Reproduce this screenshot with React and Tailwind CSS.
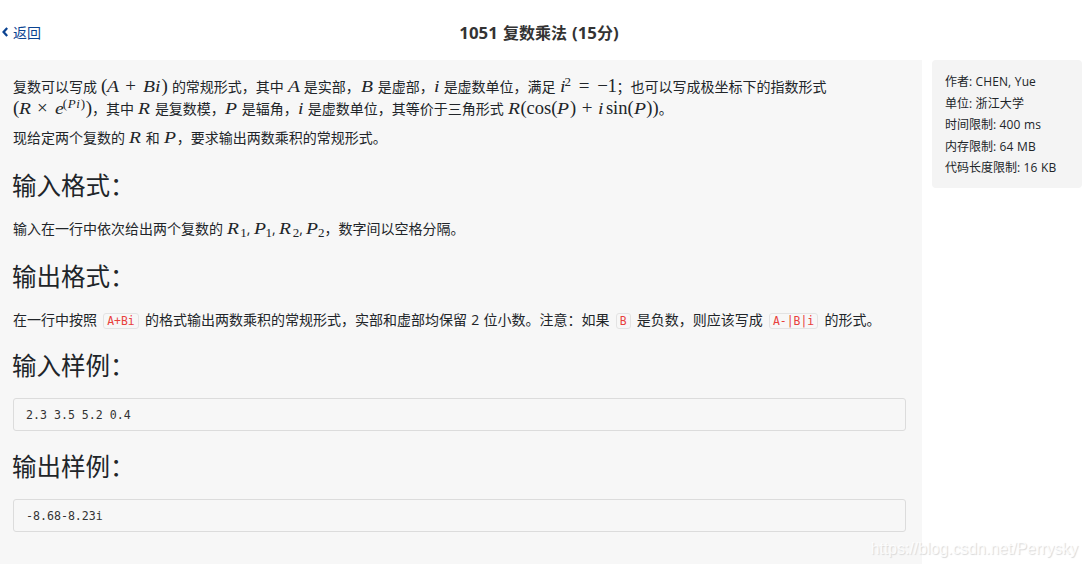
import React from "react";

const samples = {
	input: "2.3 3.5 5.2 0.4",
	output: "-8.68-8.23i",
};

const limits = [
	["作者", "CHEN, Yue"],
	["单位", "浙江大学"],
	["时间限制", "400 ms"],
	["内存限制", "64 MB"],
	["代码长度限制", "16 KB"],
];

// inline formula, the parts are spread over the given width
function Formula({ className, children }) {
	return (
		<span
			className={`inline-flex items-baseline justify-between whitespace-nowrap font-['Liberation_Serif',serif] text-[17.5px] leading-none ${className}`}
		>
			{children}
		</span>
	);
}

// variable name, drawn a little wider than the plain italic
function Var({ children }) {
	return (
		<i className="inline-block origin-left scale-x-[1.12]">{children}</i>
	);
}

function Sup({ children }) {
	return <sup className="top-[-6px] text-[13px] leading-none">{children}</sup>;
}

function Sub({ children }) {
	return <sub className="bottom-[-3px] text-[13px] leading-none">{children}</sub>;
}

function Code({ children }) {
	return (
		<code className="mx-[2px] inline-block h-4 rounded-[3px] border border-[#e3e3e3] px-[3px] text-center align-[0px] font-['DejaVu_Sans_Mono',monospace] text-[11.4px] leading-[14px] text-[#e8413c]">
			{children}
		</code>
	);
}

function Heading({ children }) {
	return (
		<h3 className="-ml-px h-[30px] text-[24.5px] leading-[30px] font-normal">
			{children}
		</h3>
	);
}

function Sample({ children }) {
	return (
		<pre className="h-[33px] rounded-[3px] border border-[#dcdcdc] px-3 font-['DejaVu_Sans_Mono',monospace] text-[11.6px] leading-[32px] text-[#333] [word-spacing:0px]">
			{children}
		</pre>
	);
}

function App() {
	return (
		<div className="relative h-[567px] w-[1087px] overflow-hidden bg-white font-['Open_Sans','Noto_Sans_CJK_SC',sans-serif] text-sm text-[#212529]">
			{/* --- Header --- */}
			<header className="grid h-[60px] grid-cols-[200px_678px_1fr] items-center pt-[6px]">
				<a className="flex items-center gap-[5px] pl-[2px] text-[#0b4391]">
					<svg viewBox="0 0 6 10" className="mb-[2px] h-[10px] w-[6px]" fill="none">
						<path d="M5.2 1 1.6 5 5.2 9" stroke="currentColor" strokeWidth="2.3" />
					</svg>
					<span>返回</span>
				</a>
				<h1 className="text-center text-base font-bold text-[#333] [word-spacing:1px]">
					<span className="text-[16.8px]">1051</span> 复数乘法{" "}
					<span className="text-[16.8px]">(15</span>分
					<span className="text-[16.8px]">)</span>
				</h1>
			</header>

			<div className="flex items-start gap-[10px]">
				{/* --- Problem --- */}
				<main className="h-[504px] w-[922px] bg-[#f7f7f7] pr-4 pl-[13px] whitespace-nowrap [word-spacing:0.3px]">
					<div className="mt-4 h-[22px] leading-[22px]">
						复数可以写成{" "}
						<Formula className="w-[67px]">
							<span>
								<span className="text-[19px]">(</span>
								<Var>A</Var>
							</span>
							<span className="text-[19px]">+</span>
							<span>
								<Var>Bi</Var>
								<span className="ml-[3px] text-[19px]">)</span>
							</span>
						</Formula>{" "}
						的常规形式，其中 <Formula className="w-[12px]"><Var>A</Var></Formula>{" "}
						是实部，<Formula className="w-[14px] pl-px"><Var>B</Var></Formula>{" "}
						是虚部，<Formula className="w-[6px]"><Var>i</Var></Formula>{" "}
						是虚数单位，满足{" "}
						<Formula className="w-[57px]">
							<span><Var>i</Var><Sup>2</Sup></span>
							<span className="text-[19px]">=</span>
							<span className="text-[19px] tracking-[-0.5px]">−1</span>
						</Formula>
						；也可以写成极坐标下的指数形式
					</div>
					<div className="h-[22px] leading-[22px]">
						<Formula className="w-[79px]">
							<span>
								<span className="text-[19px]">(</span>
								<Var>R</Var>
							</span>
							<span className="text-[19px]">×</span>
							<span>
								<Var>e</Var>
								<Sup>
									<span className="tracking-[0.7px]">(<i>Pi</i>)</span>
								</Sup>
								<span className="text-[19px]">)</span>
							</span>
						</Formula>
						，其中 <Formula className="w-[13px]"><Var>R</Var></Formula>{" "}
						是复数模，<Formula className="w-[13px]"><Var>P</Var></Formula>{" "}
						是辐角，<Formula className="w-[6px]"><Var>i</Var></Formula>{" "}
						是虚数单位，其等价于三角形式{" "}
						<Formula className="w-[151px]">
							<span>
								<Var>R</Var>
								<span className="ml-[2px] text-[18.5px]">(cos(</span>
								<Var>P</Var>
								<span className="ml-[2px] text-[18.5px]">)</span>
							</span>
							<span className="text-[19px]">+</span>
							<span>
								<Var>i</Var>
								<span className="ml-[3px] text-[18.5px]">sin(</span>
								<Var>P</Var>
								<span className="ml-[2px] text-[18.5px]">))</span>
							</span>
						</Formula>
						。
					</div>
					<div className="mt-[7px] h-[22px] leading-[22px]">
						现给定两个复数的 <Formula className="w-[13px]"><Var>R</Var></Formula> 和{" "}
						<Formula className="w-[13px]"><Var>P</Var></Formula>
						，要求输出两数乘积的常规形式。
					</div>

					<div className="mt-[22px]"><Heading>输入格式：</Heading></div>
					<div className="mt-[17px] h-[22px] leading-[22px] [word-spacing:0px]">
						输入在一行中依次给出两个复数的{" "}
						<Formula className="w-[20px]"><Var>R</Var><Sub>1</Sub></Formula>,{" "}
						<Formula className="w-[18px]"><Var>P</Var><Sub>1</Sub></Formula>,{" "}
						<Formula className="w-[20px]"><Var>R</Var><Sub>2</Sub></Formula>,{" "}
						<Formula className="w-[18px]"><Var>P</Var><Sub>2</Sub></Formula>
						，数字间以空格分隔。
					</div>

					<div className="mt-[22px]"><Heading>输出格式：</Heading></div>
					<div className="mt-[17px] h-[22px] leading-[22px] [word-spacing:0.6px]">
						在一行中按照 <Code>A+Bi</Code>{" "}
						的格式输出两数乘积的常规形式，实部和虚部均保留 2
						位小数。注意：如果 <Code>B</Code> 是负数，则应该写成{" "}
						<Code>A-|B|i</Code> 的形式。
					</div>

					<div className="mt-[20px]"><Heading>输入样例：</Heading></div>
					<div className="mt-[17px]"><Sample>{samples.input}</Sample></div>
					<div className="mt-[21px]"><Heading>输出样例：</Heading></div>
					<div className="mt-[17px]"><Sample>{samples.output}</Sample></div>
				</main>

				{/* --- Limits --- */}
				<aside className="h-32 w-[150px] rounded bg-[#f4f4f4] pt-[11px] pl-[13px] text-xs leading-[21.6px] [word-spacing:0.3px]">
					{limits.map(([label, value]) => (
						<div key={label} className="h-[21.6px]">
							{label}: <span className="tracking-[0.1px]">{value}</span>
						</div>
					))}
				</aside>
			</div>

			{/* Watermark */}
			<div className="absolute right-[9px] bottom-[8px] font-['Liberation_Sans',sans-serif] text-[15.8px] leading-5 text-white/80 [text-shadow:1px_1px_1px_#d8d8d8]">
				https://blog.csdn.net/Perrysky
			</div>
		</div>
	);
}

export default App;
